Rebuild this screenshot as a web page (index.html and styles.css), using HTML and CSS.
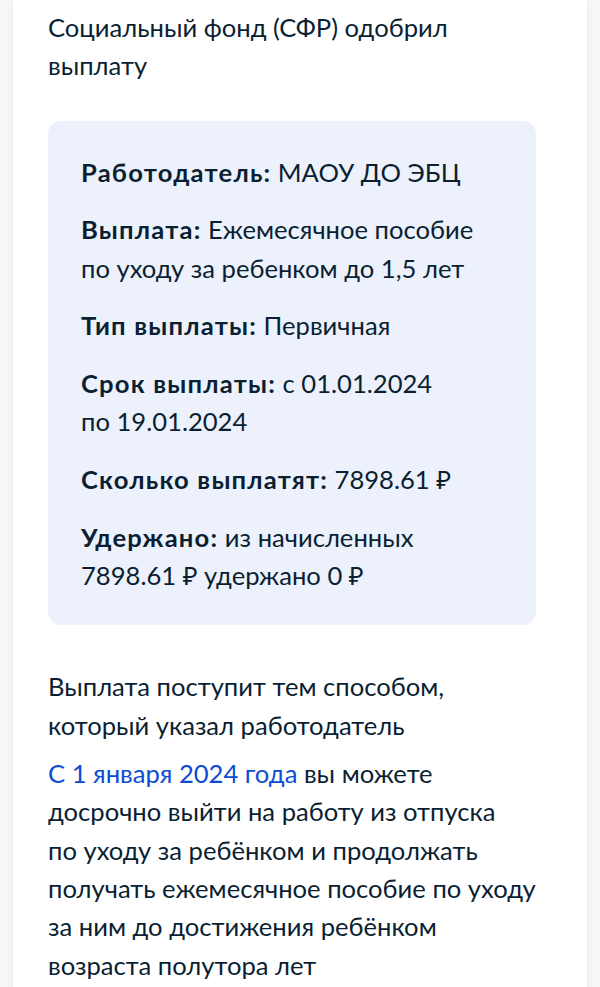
FILE: index.html
```html
<!DOCTYPE html>
<html lang="ru">
<head>
    <meta charset="UTF-8">
    <meta name="viewport" content="width=device-width, initial-scale=1.0">
    <title>Выплата одобрена</title>
    <link rel="stylesheet" href="styles.css">
</head>
<body>
    <div class="card">
        <p class="title">Социальный фонд (СФР) одобрил<br>выплату</p>

        <div class="details">
            <p><b>Работодатель:</b> МАОУ ДО ЭБЦ</p>
            <p><b>Выплата:</b> Ежемесячное пособие<br>по уходу за ребенком до 1,5 лет</p>
            <p><b>Тип выплаты:</b> Первичная</p>
            <p><b>Срок выплаты:</b> с 01.01.2024<br>по 19.01.2024</p>
            <p><b>Сколько выплатят:</b> 7898.61 ₽</p>
            <p><b>Удержано:</b> из начисленных<br>7898.61 ₽ удержано 0 ₽</p>
        </div>

        <p class="note">Выплата поступит тем способом,<br>который указал работодатель</p>
        <p class="note"><a href="#" class="link">С 1 января 2024 года</a> вы можете<br>досрочно выйти на работу из отпуска<br>по уходу за ребёнком и продолжать<br>получать ежемесячное пособие по уходу<br>за ним до достижения ребёнком<br>возраста полутора лет</p>
    </div>
</body>
</html>
```

FILE: styles.css
```css
:root {
    --text-color: #0b1f33;
    --link-color: #0d4cd3;
    --box-color: #ecf1fb;
    --page-color: #f6f7f9;
}

* {
    box-sizing: border-box;
    margin: 0;
    padding: 0;
}

body {
    background-color: var(--page-color);
    color: var(--text-color);
    font-family: Lato, 'Noto Sans', sans-serif;
    font-size: 25.6px;
    line-height: 38.4px;
    padding: 0 13px;
    overflow: hidden;
    height: 987px;
}

.card {
    background: white;
    padding: 8px 35px 40px;
    box-shadow: 0 0 8px rgba(11, 31, 51, 0.06);
    min-height: 100%;
}

.title {
    margin-bottom: 36px;
}

.details {
    background: var(--box-color);
    border-radius: 13px;
    padding: 32px 33px 31px;
    margin: 0 16px 42px 0;
}

.details p + p {
    margin-top: 19.2px;
}

.details b {
    font-weight: 700;
    letter-spacing: 1.2px;
}

.note + .note {
    margin-top: 9.6px;
}

.link {
    color: var(--link-color);
    text-decoration: none;
}
```
